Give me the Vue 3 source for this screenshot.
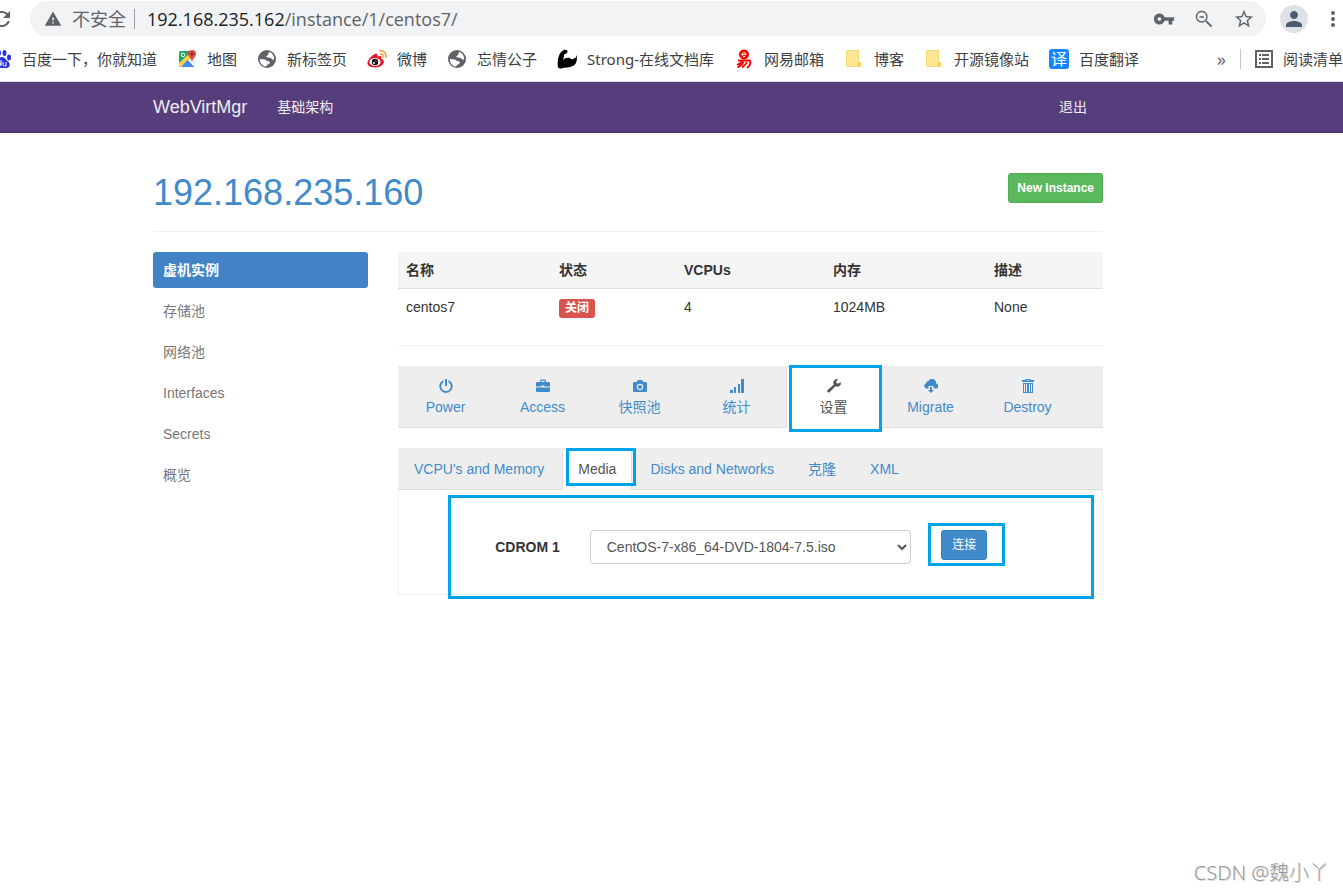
<template>
  <div class="page">
    <header class="browser">
      <div class="address-row">
        <button class="icon-btn reload" aria-label="reload">
          <svg viewBox="0 0 24 24" width="24" height="24"><path d="M17.65 6.35C16.2 4.9 14.21 4 12 4c-4.42 0-7.99 3.58-7.99 8s3.57 8 7.99 8c3.73 0 6.84-2.55 7.73-6h-2.08c-.82 2.33-3.04 4-5.65 4-3.31 0-6-2.69-6-6s2.69-6 6-6c1.66 0 3.14.69 4.22 1.78L13 11h7V4l-2.35 2.35z" /></svg>
        </button>
        <div class="address">
          <svg class="warn" viewBox="0 0 24 24" width="18" height="18"><path d="M1 21h22L12 2 1 21zm12-3h-2v-2h2v2zm0-4h-2v-4h2v4z" /></svg>
          <span class="unsafe">不安全</span>
          <span class="url"><b>192.168.235.162</b>/instance/1/centos7/</span>
          <div class="address-tools">
            <button class="icon-btn" v-for="t in tools" :key="t.name" :aria-label="t.name">
              <svg viewBox="0 0 24 24" width="22" height="22"><path :d="t.path" /></svg>
            </button>
          </div>
        </div>
        <button class="icon-btn avatar" aria-label="profile">
          <svg viewBox="0 0 24 24" width="24" height="24"><path d="M12 12c2.21 0 4-1.79 4-4s-1.79-4-4-4-4 1.79-4 4 1.79 4 4 4zm0 2c-2.67 0-8 1.34-8 4v2h16v-2c0-2.66-5.33-4-8-4z" /></svg>
        </button>
        <button class="icon-btn dots" aria-label="menu">
          <svg viewBox="0 0 4 18" width="4" height="18"><circle cx="2" cy="3" r="2" /><circle cx="2" cy="9" r="2" /><circle cx="2" cy="15" r="2" /></svg>
        </button>
      </div>

      <nav class="bookmarks">
        <a href="#" v-for="b in bookmarks" :key="b.text">
          <svg viewBox="0 0 20 20" width="20" height="20">
            <g v-if="b.icon === 'baidu'" fill="#2932e1">
              <ellipse cx="3" cy="8" rx="2" ry="3" />
              <ellipse cx="7" cy="4" rx="2" ry="3" />
              <ellipse cx="12.5" cy="4" rx="2" ry="3" />
              <ellipse cx="17" cy="8.500" rx="2" ry="3" />
              <path d="M10 8c-3 0-3.500 3-5.500 4.500C2 14.500 3 19 6 19h8c4 0 5-4 2-6.500C14 11 13 8 10 8z" />
              <path d="M9 11v6M9 15a1.500 1.500 0 1 0 0 .1M11 13v2.500q0 1.500 1.500 1.500H14v-4" fill="none" stroke="#fff" />
            </g>
            <g v-else-if="b.icon === 'map'">
              <path d="M2 4q0-2 2-2h11L2 16z" fill="#1fa463" />
              <path d="M18 8v8L11 9.500z" fill="#e8eaed" />
              <path d="M2 14L13 4l3 3L5 18H2z" fill="#ffd04b" />
              <path d="M4 18l6.500-7 7 7z" fill="#4688f4" />
              <path d="M15 1a4 4 0 0 0-4 4c0 3 3.500 4 4 8 .5-4 4-5 4-8a4 4 0 0 0-4-4z" fill="#dd4b3e" />
              <circle cx="15" cy="5" r="1.500" fill="#822c24" />
              <circle cx="6" cy="6" r="1.800" fill="none" stroke="#fff" />
            </g>
            <g v-else-if="b.icon === 'globe'">
              <circle cx="10" cy="10" r="9" fill="#5f6368" />
              <path d="M12 3c3 .5 5 3 5.200 7l-1.500 1-1.700-2-3.500-.5-1.500-1L11 6zM2.800 10L8 10.500l2 1.500 2 .3 1 1.200-.8 1.500-1.700.5-1.500 2C5 17 2.800 14 2.800 10z" fill="#fff" />
            </g>
            <g v-else-if="b.icon === 'weibo'">
              <path d="M8 5c2-.5 3 .5 2.500 2.500C14 6 15 7.500 14.200 9.500c6 2.500 1 9-6 9C-1 18.500-1 13 3 9c1.500-2 3.500-3.500 5-4z" fill="#e6162d" />
              <ellipse cx="8" cy="13" rx="5.600" ry="4" fill="#fff" />
              <circle cx="8" cy="13" r="3.200" fill="#111" />
              <circle cx="7" cy="14" r="1" fill="#fff" /><circle cx="9" cy="12" r=".6" fill="#fff" />
              <path d="M13 2c4-1 7 2.500 5.500 6.500M13.500 5c2-.3 3 1 2.500 3" fill="none" stroke="#ff9933" stroke-width="1.500" stroke-linecap="round" />
            </g>
            <path v-else-if="b.icon === 'strong'" fill="#000" d="M4 3l3.500-2.500 3 1-.3 2.500L8 5 7 6c0 2-.5 3.500-1 5 2.500-3 7-3 8.500-.5l4-1.500 1-3c1 5 0 9-3.500 11-4 2-7 1-10 2-2 .8-4 .7-5-.5C0 12 1.500 6 4 3z" />
            <g v-else-if="b.icon === 'yi'" fill="#f00">
              <circle cx="10" cy="5.500" r="5" />
              <path d="M8 5.500h4a2 2 0 1 0-.8 1.800" fill="none" stroke="#fff" />
              <path d="M4 11.500h12c1 3-1 6-3 7.500M9 11c-1 2-3 4-6 5M9.500 13c-1 2.500-3 4-6 5.500M13 13c-1 2.500-3 4-5 5.500" fill="none" stroke="#f00" stroke-width="1.800" />
            </g>
            <g v-else-if="b.icon === 'folder'">
              <path d="M3 1h12v12h2v4q0 1-1 1H3q-1 0-1-1V2q0-1 1-1z" fill="#ffe695" />
              <path d="M15 13c-2 0-2 5 0 5s2-1 2-5z" fill="#f5cf58" />
              <path d="M3 1.500h11.500V13M2.500 2v14.500q0 1 1 1H15" fill="none" stroke="#f8d978" />
            </g>
            <g v-else-if="b.icon === 'fanyi'">
              <rect width="20" height="20" rx="3" fill="#1487ff" />
              <text x="10" y="16" text-anchor="middle" font-size="16" fill="#fff">译</text>
            </g>
          </svg>
          <span>{{ b.text }}</span>
        </a>
        <button class="icon-btn more" aria-label="more">»</button>
        <a href="#" class="reading">
          <svg viewBox="0 0 18 18" width="18" height="18" fill="#5f6368"><path d="M0 0h18v18H0zM2 2v14h14V2z" fill-rule="evenodd" /><path d="M4 4h2v2H4zM7 4h7v2H7zM4 8h2v2H4zM7 8h7v2H7zM4 12h2v2H4zM7 12h7v2H7z" /></svg>
          <span>阅读清单</span>
        </a>
      </nav>
    </header>

    <nav class="navbar">
      <a href="#" class="brand">WebVirtMgr</a>
      <a href="#">基础架构</a>
      <a href="#" class="logout">退出</a>
    </nav>

    <main class="container">
      <div class="page-header">
        <h1><a href="#">192.168.235.160</a></h1>
        <button class="btn btn-success">New Instance</button>
      </div>

      <div class="columns">
        <ul class="sidebar">
          <li v-for="(m, i) in menu" :key="m"><a href="#" :class="{ active: i === 0 }">{{ m }}</a></li>
        </ul>

        <section>
          <table>
            <thead>
              <tr><th class="c1">名称</th><th class="c2">状态</th><th class="c3">VCPUs</th><th class="c4">内存</th><th>描述</th></tr>
            </thead>
            <tbody>
              <tr><td>centos7</td><td><span class="label">关闭</span></td><td>4</td><td>1024MB</td><td>None</td></tr>
            </tbody>
          </table>
          <hr />

          <ul class="actions">
            <li v-for="a in actions" :key="a.text" :class="{ active: a.active }">
              <a href="#">
                <svg viewBox="0 0 14 14" width="14" height="14"><path :d="a.path" fill-rule="evenodd" /></svg>
                <span>{{ a.text }}</span>
              </a>
              <i v-if="a.active" class="mark"></i>
            </li>
          </ul>

          <ul class="tabs">
            <li v-for="t in tabs" :key="t" :class="{ active: t === current }">
              <a href="#" @click.prevent="current = t">{{ t }}</a>
              <i v-if="t === 'Media'" class="mark"></i>
            </li>
          </ul>
          <div class="tab-content">
            <form class="media" @submit.prevent>
              <label for="cdrom">CDROM 1</label>
              <select id="cdrom" v-model="iso">
                <option>CentOS-7-x86_64-DVD-1804-7.5.iso</option>
              </select>
              <div class="connect">
                <button class="btn btn-primary">连接</button>
                <i class="mark"></i>
              </div>
            </form>
            <i class="mark mark-form"></i>
          </div>
        </section>
      </div>
    </main>
    <div class="watermark">CSDN @魏小丫</div>
  </div>
</template>

<script setup>
import { ref } from 'vue'

const current = ref('Media')
const iso = ref('CentOS-7-x86_64-DVD-1804-7.5.iso')

const tools = [
  { name: 'password', path: 'M12.65 10C11.83 7.67 9.61 6 7 6c-3.31 0-6 2.69-6 6s2.69 6 6 6c2.61 0 4.83-1.67 5.65-4H17v4h4v-4h2v-4H12.65zM7 14c-1.1 0-2-.9-2-2s.9-2 2-2 2 .9 2 2-.9 2-2 2z' },
  { name: 'zoom', path: 'M15.5 14h-.79l-.28-.27C15.41 12.59 16 11.11 16 9.5 16 5.91 13.09 3 9.5 3S3 5.91 3 9.5 5.91 16 9.5 16c1.61 0 3.09-.59 4.23-1.57l.27.28v.79l5.5 5.5L21 19.500l-5.500-5.500zm-6 .5c-2.800 0-5-2.200-5-5s2.200-5 5-5 5 2.200 5 5-2.200 5-5 5zM7 9h5v1.500H7z' },
  { name: 'star', path: 'M22 9.24l-7.19-.62L12 2 9.19 8.63 2 9.24l5.46 4.73L5.82 21 12 17.27 18.18 21l-1.63-7.03L22 9.24zM12 15.4l-3.76 2.27 1-4.28-3.32-2.88 4.38-.38L12 6.1l1.71 4.04 4.38.38-3.32 2.88 1 4.28L12 15.4z' }
]

const bookmarks = [
  { icon: 'baidu', text: '百度一下，你就知道' },
  { icon: 'map', text: '地图' },
  { icon: 'globe', text: '新标签页' },
  { icon: 'weibo', text: '微博' },
  { icon: 'globe', text: '忘情公子' },
  { icon: 'strong', text: 'Strong-在线文档库' },
  { icon: 'yi', text: '网易邮箱' },
  { icon: 'folder', text: '博客' },
  { icon: 'folder', text: '开源镜像站' },
  { icon: 'fanyi', text: '百度翻译' }
]

const menu = ['虚机实例', '存储池', '网络池', 'Interfaces', 'Secrets', '概览']
const tabs = ["VCPU's and Memory", 'Media', 'Disks and Networks', '克隆', 'XML']

const actions = [
  { text: 'Power', path: 'M6 0h2v7H6zM4.500 1v2.200a4.800 4.800 0 1 0 5 0V1a6.700 6.700 0 1 1-5 0z' },
  { text: 'Access', path: 'M4 3V1.500Q4 .5 5 .5h4q1 0 1 1V3h3q1 0 1 1v3.500H8.500v-1h-3v1H0V4q0-1 1-1zM5.200 3h3.600V1.700H5.200zM0 8.500h14V12q0 1-1 1H1q-1 0-1-1z' },
  { text: '快照池', path: 'M1 3h2.500L5 1h4l1.500 2H13q1 0 1 1V12q0 1-1 1H1q-1 0-1-1V4q0-1 1-1zM7 4.800a3.200 3.200 0 1 0 0 6.400 3.200 3.200 0 0 0 0-6.400zM7 6a2 2 0 1 1 0 4 2 2 0 0 1 0-4z' },
  { text: '统计', path: 'M0 11h3v3H0zM4 8h2v6H4zM8 5h2v9H8zM11 0h3v14h-3z' },
  { text: '设置', active: true, path: 'M13.800 3.200a3.600 3.600 0 0 1-5.200 4L2.700 13.100a1.300 1.300 0 0 1-2-2L6.800 5.400A3.600 3.600 0 0 1 11 .2L9.300 2.500l.3 1.700 1.800.4z' },
  { text: 'Migrate', path: 'M2.500 9.500a2.600 2.600 0 0 1-.6-5A3 3 0 0 1 4.500 2 4 4 0 0 1 12 4.500a2.500 2.500 0 0 1 0 5H9.500V7h-5v2.500zM6 8h2v3h2l-3 3-3-3h2z' },
  { text: 'Destroy', path: 'M4.500 1V0h5v1H13v2H1V1zM6 1v.8h2V1zM2 4h10v10H2zM3 5v8h1V5zM5 5v8h1V5zM8 5v8h1V5zM10 5v8h1V5z' }
]
</script>

<style>
body {
  margin: 0;
}
</style>

<style scoped>
.page {
  position: relative;
  min-height: 100vh;
  overflow: hidden;
  background: #fff;
  color: #333;
  font: 14px/20px "Liberation Sans", "Noto Sans CJK SC", sans-serif;
}

* {
  box-sizing: border-box;
}

a {
  color: #428bca;
  text-decoration: none;
}

ul {
  margin: 0;
  padding: 0;
  list-style: none;
}

svg {
  flex: none;
  display: block;
}

.browser {
  height: 82px;
  border-bottom: 1px solid #dadce0;
  font-family: "Open Sans", "Noto Sans CJK SC", sans-serif;
}

.address-row {
  display: flex;
  align-items: center;
  padding: 1px 8px 0 0;
}

.icon-btn {
  display: flex;
  padding: 0;
  border: 0;
  background: none;
  color: #5f6368;
  fill: #5f6368;
}

.reload {
  margin: 0 16px 0 -10px;
}

.address {
  flex: 1;
  display: flex;
  align-items: center;
  height: 35px;
  padding: 0 11px 0 14px;
  border-radius: 18px;
  background: #f1f3f4;
  color: #5f6368;
  font-size: 18px;
  line-height: 24px;
}

.warn {
  margin-right: 10px;
  fill: #5f6368;
}

.unsafe {
  margin-right: 12px;
  padding-right: 8px;
  border-right: 1px solid #9aa0a6;
  line-height: 20px;
}

.url b {
  color: #202124;
  font-weight: normal;
}

.address-tools {
  display: flex;
  gap: 18px;
  margin-left: auto;
}

.avatar {
  justify-content: center;
  align-items: center;
  width: 28px;
  height: 28px;
  margin: 0 23px 0 14px;
  border-radius: 14px;
  background: #dee1e6;
  fill: #4d5c72;
}

.bookmarks {
  display: flex;
  align-items: center;
  gap: 20px;
  height: 46px;
  margin-left: -8px;
  font-family: "Noto Sans", "Noto Sans CJK SC", sans-serif;
  font-size: 15px;
  white-space: nowrap;
}

.bookmarks a {
  display: flex;
  align-items: center;
  gap: 10px;
  color: #3c4043;
}

.more {
  margin-left: auto;
  margin-right: -6px;
  font: 18px/20px "Open Sans", sans-serif;
}

.bookmarks .reading {
  padding-left: 14px;
  border-left: 1px solid #c6c8cc;
}

.navbar {
  display: flex;
  align-items: center;
  height: 51px;
  padding: 0 256px 0 153px;
  border-bottom: 1px solid #463265;
  background: #563d7c;
}

.navbar a {
  color: #eee;
}

.navbar .brand {
  margin-right: 30px;
  font-size: 18px;
}

.navbar .logout {
  margin-left: auto;
}

.container {
  padding: 40px 240px 0 153px;
}

.page-header {
  display: flex;
  justify-content: space-between;
  align-items: flex-start;
  height: 59px;
  margin-bottom: 20px;
  border-bottom: 1px solid #eee;
}

h1 {
  margin: 0;
  font-size: 36px;
  font-weight: normal;
  line-height: 40px;
}

.btn {
  height: 30px;
  padding: 0 10px;
  border: 1px solid;
  border-radius: 3px;
  color: #fff;
  font: 12px/18px "Liberation Sans", "Noto Sans CJK SC", sans-serif;
}

.btn-success {
  padding: 0 8px;
  border-color: #4cae4c;
  background: #5cb85c;
  font-weight: bold;
}

.btn-primary {
  border-color: #357ebd;
  background: #428bca;
}

.columns {
  display: grid;
  grid-template-columns: 215px 1fr;
  gap: 30px;
}

.sidebar li {
  margin-bottom: 5px;
}

.sidebar a {
  display: block;
  padding: 8px 10px;
  border-radius: 3px;
  color: #777;
}

.sidebar .active {
  background: #4183c4;
  color: #fff;
  font-weight: bold;
}

table {
  width: 100%;
  margin-bottom: 20px;
  border-spacing: 0;
  table-layout: fixed;
}

th,
td {
  height: 36px;
  padding: 0 8px;
  line-height: 20px;
  text-align: left;
}

th {
  height: 37px;
  border-bottom: 1px solid #ddd;
  background: #f5f5f5;
}

.c1 {
  width: 153px;
}

.c2 {
  width: 125px;
}

.c3 {
  width: 149px;
}

.c4 {
  width: 161px;
}

.label {
  display: inline-block;
  padding: 0 6px;
  border-radius: 3px;
  background: #d9534f;
  color: #fff;
  font-size: 12px;
  font-weight: bold;
  line-height: 19px;
}

hr {
  margin: 0 0 20px;
  border: 0;
  border-top: 1px solid #eee;
}

.actions,
.tabs {
  display: flex;
  background: #eee;
  border-bottom: 1px solid #ddd;
}

.actions {
  height: 62px;
  margin-bottom: 20px;
}

.actions li,
.tabs li {
  position: relative;
  margin-bottom: -1px;
}

.actions li {
  width: 97px;
}

.actions a {
  display: flex;
  flex-direction: column;
  align-items: center;
  gap: 4px;
  height: 62px;
  margin-right: 2px;
  padding-top: 12px;
  border: 1px solid transparent;
  border-radius: 4px 4px 0 0;
  fill: #428bca;
}

.tabs a {
  display: block;
  margin-right: 2px;
  padding: 10px 15px;
  border: 1px solid transparent;
  border-radius: 4px 4px 0 0;
}

.active > a {
  border-color: #ddd #ddd #fff;
  background: #fff;
  color: #555;
  fill: #555;
}

/* highlight frames drawn over the page */
.mark {
  position: absolute;
  border: 3px solid #00a2e8;
  pointer-events: none;
}

.actions .mark {
  top: -1px;
  right: 1px;
  bottom: -4px;
  left: 3px;
}

.tabs .mark {
  top: 0;
  right: -2px;
  bottom: 4px;
  left: 4px;
}

.tab-content {
  position: relative;
  border: 1px solid #eee;
  border-top: 0;
}

.mark-form {
  top: 5px;
  right: 8px;
  bottom: -5px;
  left: 49px;
}

.media {
  display: grid;
  grid-template-columns: 1fr 2fr 1fr;
  gap: 30px;
  padding: 40px 0 30px;
}

label {
  padding-top: 7px;
  font-weight: bold;
  text-align: right;
}

select {
  width: 100%;
  height: 34px;
  padding: 6px 12px;
  border: 1px solid #ccc;
  border-radius: 4px;
  background: #fff;
  color: #555;
  font: 14px/20px "Liberation Sans", sans-serif;
}

.connect {
  position: relative;
  justify-self: start;
}

.connect .mark {
  top: -7px;
  right: -18px;
  bottom: -2px;
  left: -13px;
}

.watermark {
  position: absolute;
  right: 14px;
  bottom: 6px;
  color: #999;
  font: 20px/24px "Noto Sans", "Noto Sans CJK SC", sans-serif;
  font-weight: 300;
  text-shadow: 1px 1px 0 #ddd;
}
</style>
